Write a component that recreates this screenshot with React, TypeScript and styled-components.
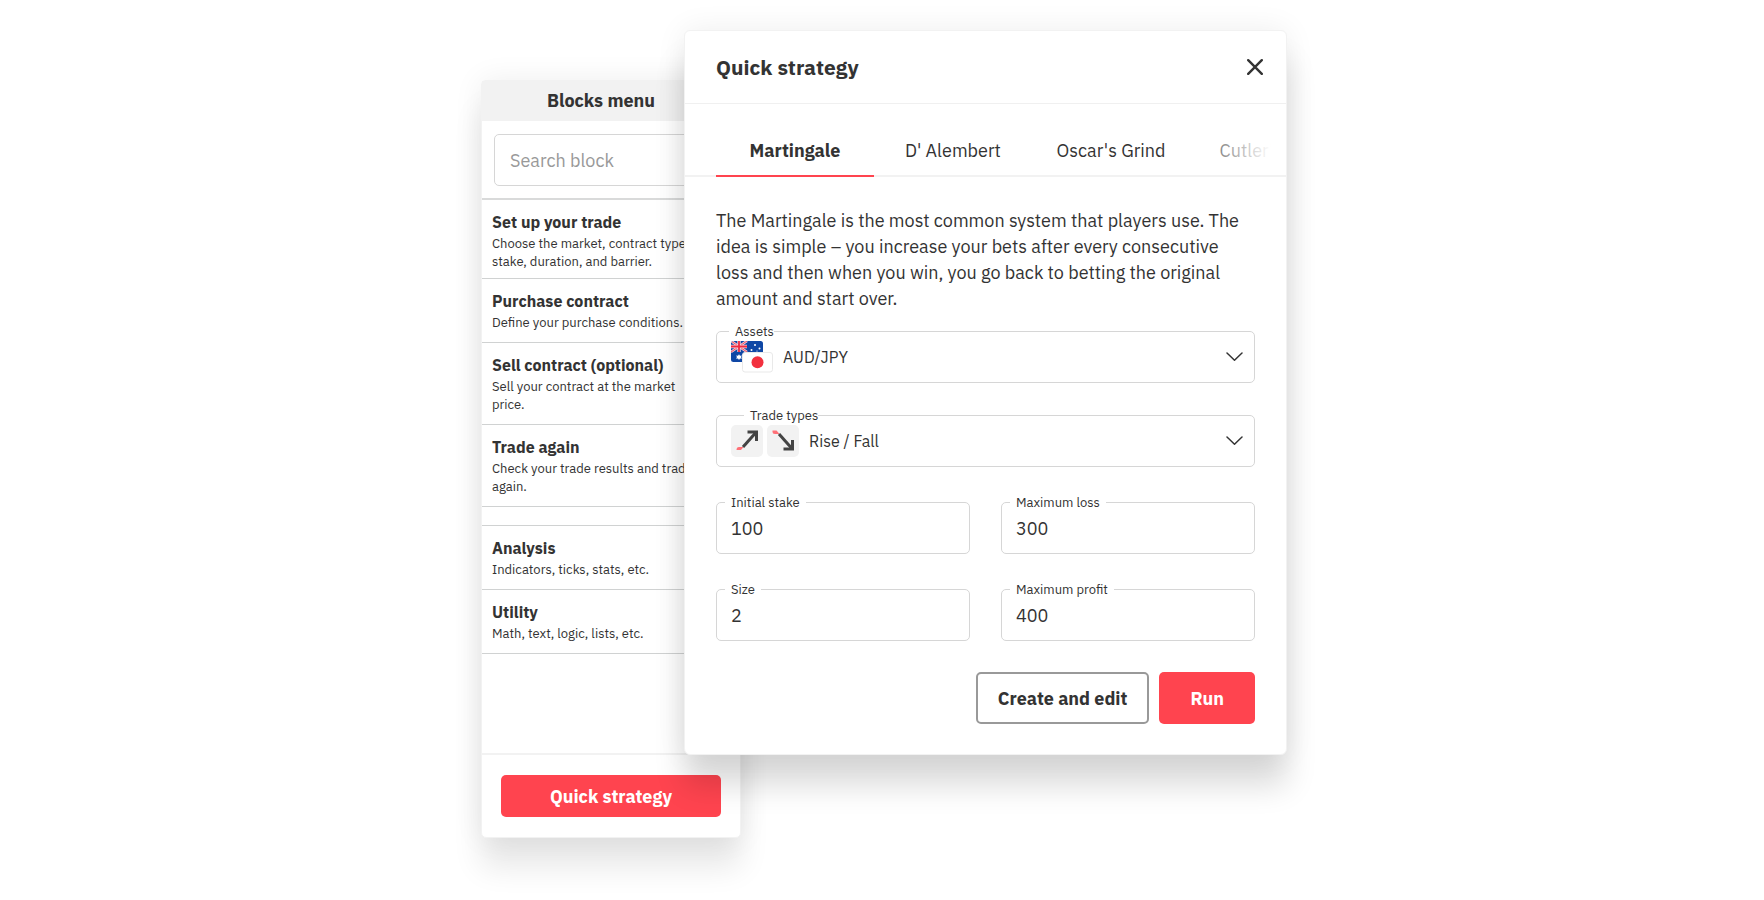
import React from "react";
import styled, { createGlobalStyle, css } from "styled-components";

const GlobalStyle = createGlobalStyle`
  *, *::before, *::after { box-sizing: border-box; }
  body {
    margin: 0;
    background: #fff;
    color: #333;
    font-family: "IBM Plex Sans", Roboto, "Noto Sans", sans-serif;
  }
  button, input, select { font: inherit; color: inherit; }
  h1, h2, h3, p { margin: 0; }
`;

const Page = styled.main`
  display: flex;
  justify-content: center;
  min-height: 100vh;
  padding: 30px 16px 32px 20px;
`;

const Stage = styled.div`
  display: flex;
  align-items: flex-start;
  width: 100%;
  max-width: 806px;
`;

/* Blocks menu */

const BlocksPanel = styled.aside`
  display: flex;
  flex-direction: column;
  flex: 0 0 260px;
  min-height: 758px;
  margin-top: 50px;
  border: 1px solid #f2f2f2;
  border-radius: 5px;
  background: #fff;
  box-shadow: 0 0 30px rgba(0, 0, 0, 0.07), 0 30px 30px rgba(0, 0, 0, 0.09);
`;

const BlocksHeader = styled.h2`
  height: 40px;
  padding-right: 20px;
  background: #f2f2f2;
  font-size: 18px;
  font-weight: 700;
  line-height: 40px;
  text-align: center;
`;

const SearchArea = styled.div`
  padding: 13px 10px 12px 12px;
  border-bottom: 2px solid #d9dada;
`;

const SearchInput = styled.input`
  display: block;
  width: 100%;
  height: 52px;
  padding: 0 15px;
  border: 1px solid #d6d6d6;
  border-radius: 5px;
  background: #fff;
  font-size: 18px;
  &::placeholder { color: #999; opacity: 1; }
`;

const BlockList = styled.ul`
  margin: 0;
  padding: 0;
  list-style: none;
`;

const BlockItem = styled.li<{ $tight?: boolean; $separated?: boolean }>`
  padding: 12px 38px ${(p) => (p.$tight ? 7 : 10)}px 10px;
  border-bottom: 1px solid #d0d2d2;
  ${(p) =>
    p.$separated &&
    css`
      margin-top: 18px;
      border-top: 1px solid #d0d2d2;
    `}
`;

const BlockTitle = styled.h3`
  margin-bottom: 3px;
  font-size: 16px;
  font-weight: 700;
  line-height: 20px;
`;

const BlockText = styled.p`
  font-size: 13px;
  line-height: 18px;
`;

const BlocksFooter = styled.div`
  margin-top: auto;
  padding: 20px 19px;
  border-top: 2px solid #f2f2f2;
`;

const PrimaryButton = styled.button`
  height: 52px;
  padding: 0 31px;
  border: 0;
  border-radius: 5px;
  background: #ff444f;
  color: #fff;
  font-size: 18px;
  font-weight: 700;
`;

const OpenStrategyButton = styled(PrimaryButton)`
  display: block;
  width: 100%;
  height: 42px;
`;

/* Quick strategy dialog */

const Dialog = styled.section`
  position: relative;
  flex: 1 1 0;
  min-width: 0;
  margin-left: -57px;
  border: 1px solid #f2f2f2;
  border-radius: 6px;
  background: #fff;
  box-shadow: 0 0 31px rgba(0, 0, 0, 0.07), 0 31px 31px rgba(0, 0, 0, 0.14);
`;

const DialogHeader = styled.header`
  display: flex;
  align-items: center;
  justify-content: space-between;
  height: 73px;
  padding: 0 18px 0 31px;
  border-bottom: 1px solid #f0f0f0;
`;

const DialogTitle = styled.h1`
  font-size: 21px;
  font-weight: 700;
  line-height: 28px;
`;

const CloseButton = styled.button`
  display: grid;
  place-items: center;
  width: 26px;
  height: 26px;
  padding: 0;
  border: 0;
  background: none;
`;

const Tabs = styled.div`
  display: flex;
  height: 73px;
  padding: 20px 15px 0 31px;
  border-bottom: 2px solid #f2f2f2;
`;

const TabStrip = styled.div`
  position: relative;
  display: flex;
  flex: 1;
  min-width: 0;
  height: 53px;
  overflow: hidden;
  &::after {
    content: "";
    position: absolute;
    top: 0;
    right: 0;
    bottom: 2px;
    width: 72px;
    background: linear-gradient(to right, rgba(255, 255, 255, 0.2), #fff);
    pointer-events: none;
  }
`;

const Tab = styled.button<{ $active?: boolean; $last?: boolean }>`
  flex: none;
  min-width: ${(p) => (p.$last ? 122 : 158)}px;
  padding: 2px 24px 0;
  border: 0;
  border-bottom: 2px solid ${(p) => (p.$active ? "#ff444f" : "transparent")};
  background: none;
  font-size: 18px;
  font-weight: ${(p) => (p.$active ? 700 : 400)};
`;

const Form = styled.form`
  padding: 31px 31px 30px;
`;

const Description = styled.p`
  margin-bottom: 19px;
  font-size: 18px;
  line-height: 26px;
`;

const Fields = styled.div`
  display: grid;
  grid-template-columns: repeat(2, minmax(0, 1fr));
  column-gap: 31px;
  row-gap: 35px;
`;

const Field = styled.div<{ $wide?: boolean }>`
  position: relative;
  grid-column: ${(p) => (p.$wide ? "1 / -1" : "auto")};
  & + &:nth-child(2) { margin-top: -3px; }
`;

const FieldLabel = styled.label<{ $inset?: number; $flush?: boolean }>`
  position: absolute;
  top: -8px;
  left: ${(p) => p.$inset ?? 9}px;
  padding: 0 ${(p) => (p.$flush ? 0 : 6)}px 0 6px;
  background: #fff;
  font-size: 13px;
  line-height: 18px;
`;

const control = css`
  display: block;
  width: 100%;
  height: 52px;
  border: 1px solid #d6d6d6;
  border-radius: 5px;
  background: #fff;
`;

const TextInput = styled.input`
  ${control}
  padding: 0 14px;
  font-size: 18px;
`;

const Select = styled.select<{ $indent: number }>`
  ${control}
  appearance: none;
  padding: 0 40px 0 ${(p) => p.$indent}px;
  font-size: 16px;
`;

const FieldIcons = styled.span`
  position: absolute;
  top: 10px;
  left: 15px;
  display: flex;
  gap: 4px;
  pointer-events: none;
`;

const Chevron = styled.svg`
  position: absolute;
  top: 21px;
  right: 12px;
  pointer-events: none;
`;

const Actions = styled.div`
  display: flex;
  justify-content: flex-end;
  gap: 10px;
  margin-top: 31px;
`;

const SecondaryButton = styled.button`
  height: 52px;
  padding: 0 20px;
  border: 2px solid #999;
  border-radius: 5px;
  background: #fff;
  font-size: 18px;
  font-weight: 700;
`;

const CurrencyFlags = () => (
  <svg width="43" height="32" viewBox="0 0 43 32" aria-hidden="true">
    <defs>
      <clipPath id="au">
        <rect width="32" height="21" rx="2.5" />
      </clipPath>
    </defs>
    <g clipPath="url(#au)">
      <rect width="32" height="21" fill="#0f47a5" />
      <path d="M0 0L16 11M16 0L0 11" stroke="#f6c9d2" strokeWidth="2.6" />
      <path d="M0 0L16 11M16 0L0 11" stroke="#ee5063" strokeWidth="1" />
      <path d="M8 0V11M0 5.500H16" stroke="#fbd5da" strokeWidth="3.400" />
      <path d="M8 0V11M0 5.500H16" stroke="#ee2b42" strokeWidth="1.800" />
      <path d="M8 13.200l1 1.500 1.800-.2-.7 1.600.7 1.700-1.800-.2-1 1.500-1-1.500-1.800.2.700-1.700-.7-1.600 1.800.2z" fill="#fff" />
      <g fill="#fff">
        <circle cx="24" cy="4" r="1" />
        <circle cx="28.500" cy="7.500" r="1" />
        <circle cx="20.500" cy="9" r="1" />
        <circle cx="26" cy="10" r=".6" />
      </g>
    </g>
    <rect x="11.500" y="11.500" width="30" height="19.500" rx="2.500" fill="#fff" stroke="#e9e9e9" />
    <circle cx="26.500" cy="21.200" r="6" fill="#f2303e" />
  </svg>
);

const RiseIcon = () => (
  <svg width="32" height="32" viewBox="0 0 32 32" aria-hidden="true">
    <rect width="32" height="32" rx="5" fill="#f2f2f2" />
    <path d="M5.500 25q0-3 2.500-3h4.500l-2.500 3z" fill="#ff7077" />
    <path d="M12 22L24 8.500" stroke="#444" strokeWidth="3" fill="none" />
    <path d="M16.500 5.500H27V16H24V9.500L22.500 8.500H16.500z" fill="#444" />
  </svg>
);

const FallIcon = () => (
  <svg width="32" height="32" viewBox="0 0 32 32" aria-hidden="true">
    <rect width="32" height="32" rx="5" fill="#f2f2f2" />
    <path d="M5.500 5.500H9.500L12.500 9H8q-2.500 0-2.500-2.500z" fill="#ff7077" />
    <path d="M12 9L24 22.500" stroke="#444" strokeWidth="3" fill="none" />
    <path d="M16.500 25.500H27V15H24V21.500L22.500 22.500H16.500z" fill="#444" />
  </svg>
);

const ChevronIcon = () => (
  <Chevron width="17" height="10" viewBox="0 0 17 10" fill="none" aria-hidden="true">
    <path d="M1 1L8.500 8.200L16 1" stroke="#333" strokeWidth="1.500" strokeLinecap="round" strokeLinejoin="round" />
  </Chevron>
);

const BLOCKS = [
  { title: "Set up your trade", text: "Choose the market, contract type, stake, duration, and barrier.", tight: true },
  { title: "Purchase contract", text: "Define your purchase conditions." },
  { title: "Sell contract (optional)", text: "Sell your contract at the market price." },
  { title: "Trade again", text: "Check your trade results and trade again." },
  { title: "Analysis", text: "Indicators, ticks, stats, etc.", separated: true },
  { title: "Utility", text: "Math, text, logic, lists, etc." },
];

const TABS = ["Martingale", "D' Alembert", "Oscar's Grind", "Cutler's"];

const AMOUNTS = [
  { id: "stake", label: "Initial stake", value: "100" },
  { id: "loss", label: "Maximum loss", value: "300" },
  { id: "size", label: "Size", value: "2" },
  { id: "profit", label: "Maximum profit", value: "400" },
];

export default function App() {
  return (
    <>
      <GlobalStyle />
      <Page>
        <Stage>
          <BlocksPanel>
            <BlocksHeader>Blocks menu</BlocksHeader>
            <SearchArea>
              <SearchInput type="search" placeholder="Search block" aria-label="Search block" />
            </SearchArea>
            <BlockList>
              {BLOCKS.map((b) => (
                <BlockItem key={b.title} $tight={b.tight} $separated={b.separated}>
                  <BlockTitle>{b.title}</BlockTitle>
                  <BlockText>{b.text}</BlockText>
                </BlockItem>
              ))}
            </BlockList>
            <BlocksFooter>
              <OpenStrategyButton type="button">Quick strategy</OpenStrategyButton>
            </BlocksFooter>
          </BlocksPanel>

          <Dialog role="dialog" aria-labelledby="dialog-title">
            <DialogHeader>
              <DialogTitle id="dialog-title">Quick strategy</DialogTitle>
              <CloseButton type="button" aria-label="Close">
                <svg width="16" height="16" viewBox="0 0 16 16" fill="none" aria-hidden="true">
                  <path d="M1.200 1.200L14.800 14.800M14.800 1.200L1.200 14.800" stroke="#333" strokeWidth="2.400" strokeLinecap="round" />
                </svg>
              </CloseButton>
            </DialogHeader>
            <Tabs>
              <TabStrip role="tablist">
                {TABS.map((t, i) => (
                  <Tab key={t} type="button" role="tab" aria-selected={i === 0} $active={i === 0} $last={i === TABS.length - 1}>
                    {t}
                  </Tab>
                ))}
              </TabStrip>
            </Tabs>
            <Form>
              <Description>
                The Martingale is the most common system that players use. The idea is simple – you increase your
                bets after every consecutive loss and then when you win, you go back to betting the original amount
                and start over.
              </Description>
              <Fields>
                <Field $wide>
                  <Select id="asset" $indent={66} defaultValue="AUD/JPY">
                    <option>AUD/JPY</option>
                  </Select>
                  <FieldLabel htmlFor="asset" $inset={13} $flush>Assets</FieldLabel>
                  <FieldIcons>
                    <CurrencyFlags />
                  </FieldIcons>
                  <ChevronIcon />
                </Field>
                <Field $wide>
                  <Select id="type" $indent={92} defaultValue="Rise / Fall">
                    <option>Rise / Fall</option>
                  </Select>
                  <FieldLabel htmlFor="type" $inset={28} $flush>Trade types</FieldLabel>
                  <FieldIcons>
                    <RiseIcon />
                    <FallIcon />
                  </FieldIcons>
                  <ChevronIcon />
                </Field>
                {AMOUNTS.map((a) => (
                  <Field key={a.id}>
                    <TextInput id={a.id} defaultValue={a.value} inputMode="numeric" />
                    <FieldLabel htmlFor={a.id}>{a.label}</FieldLabel>
                  </Field>
                ))}
              </Fields>
              <Actions>
                <SecondaryButton type="button">Create and edit</SecondaryButton>
                <PrimaryButton type="button">Run</PrimaryButton>
              </Actions>
            </Form>
          </Dialog>
        </Stage>
      </Page>
    </>
  );
}
